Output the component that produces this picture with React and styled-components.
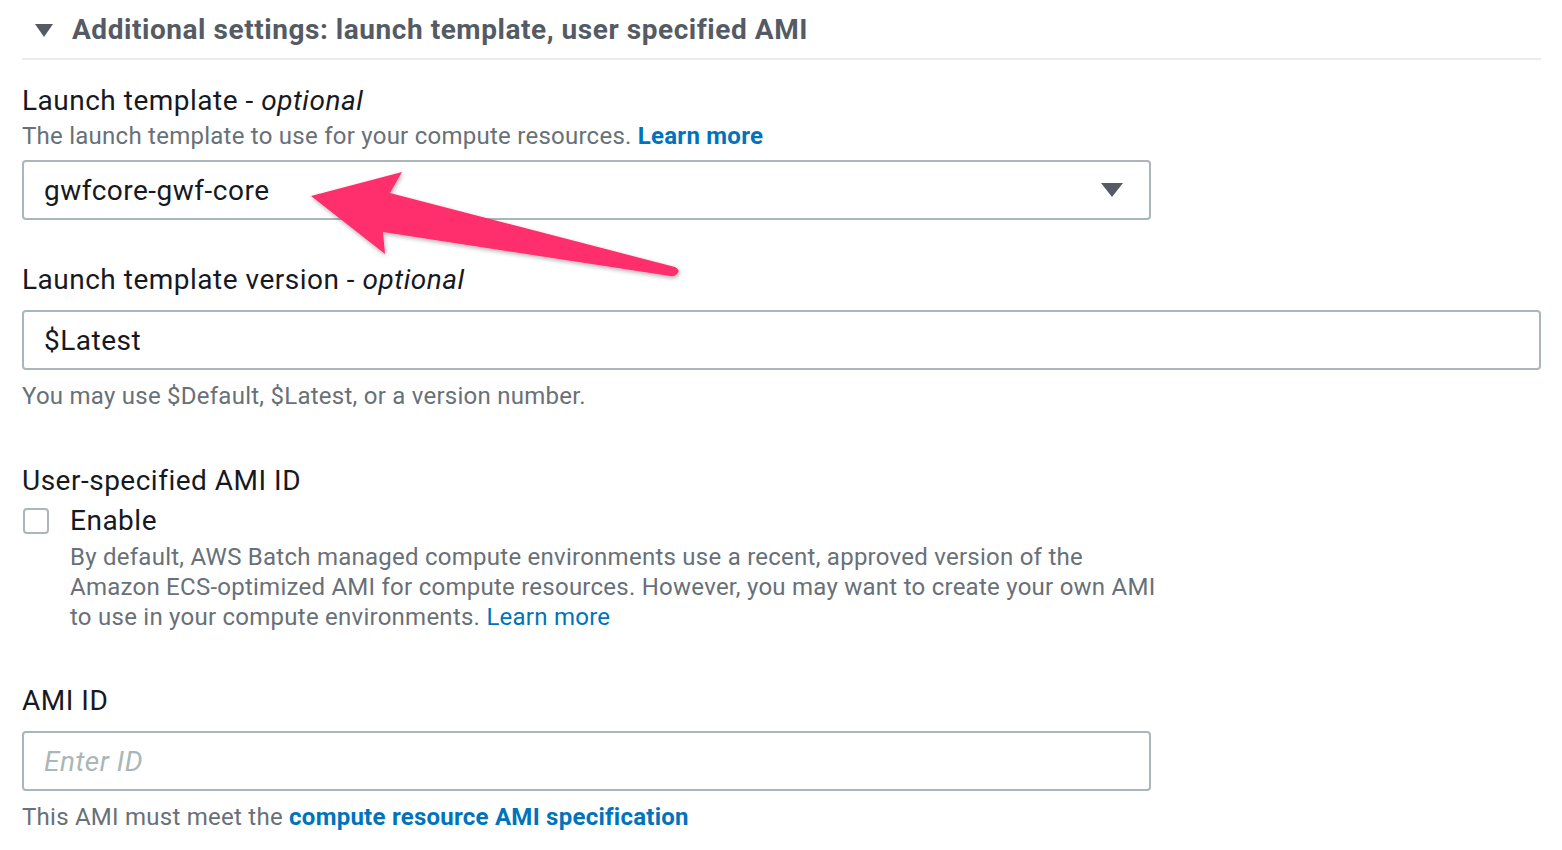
import styled, { createGlobalStyle } from "styled-components";

const GlobalStyle = createGlobalStyle`
  html, body {
    margin: 0;
    padding: 0;
    background: #ffffff;
  }
  body {
    font-family: Roboto, "Noto Sans", sans-serif;
    color: #16191f;
  }
`;

const Page = styled.div`
  position: relative;
  width: 1562px;
  height: 850px;
  box-sizing: border-box;
  padding: 1px 21px 0 22px;
  overflow: hidden;
`;

const Header = styled.div`
  display: flex;
  align-items: center;
  gap: 19px;
  padding: 9px 0 8px 13px;
  height: 40px;
  border-bottom: 2px solid #eaeded;
`;

const Caret = styled.span`
  width: 0;
  height: 0;
  border-left: 9px solid transparent;
  border-right: 9px solid transparent;
  border-top: 13px solid #545b64;
`;

const HeaderTitle = styled.h2`
  margin: 0;
  font-size: 28px;
  line-height: 40px;
  font-weight: 700;
  color: #545b64;
  letter-spacing: 0.55px;
`;

const Field = styled.div`
  display: flex;
  flex-direction: column;
  margin-top: ${(p) => p.$top}px;
  max-width: ${(p) => (p.$wide ? "1519px" : "1129px")};
`;

const Label = styled.div`
  font-size: 28px;
  line-height: 40px;
  letter-spacing: 0.5px;
  color: #16191f;
  em {
    font-style: italic;
  }
`;

const Desc = styled.div`
  font-size: 24px;
  line-height: 30px;
  letter-spacing: 0.25px;
  color: #687078;
  margin-top: ${(p) => p.$top || 0}px;
`;

const Link = styled.a`
  color: #0073bb;
  font-weight: ${(p) => (p.$bold ? 700 : 400)};
  text-decoration: none;
`;

const Box = styled.div`
  display: flex;
  align-items: center;
  justify-content: space-between;
  box-sizing: border-box;
  height: 60px;
  margin-top: ${(p) => p.$top}px;
  padding: 0 26px 0 20px;
  border: 2px solid #aab7b8;
  border-radius: 4px;
  font-size: 28px;
  letter-spacing: 0.5px;
  color: #16191f;
`;

const Placeholder = styled.span`
  color: #aab7b8;
  font-style: italic;
`;

const SelectCaret = styled.span`
  width: 0;
  height: 0;
  border-left: 11px solid transparent;
  border-right: 11px solid transparent;
  border-top: 14px solid #545b64;
`;

const CheckRow = styled.div`
  display: flex;
  gap: 21px;
  margin-top: 5px;
`;

const CheckBox = styled.span`
  flex: none;
  box-sizing: border-box;
  width: 26px;
  height: 26px;
  margin: 2px 0 0 1px;
  border: 2px solid #aab7b8;
  border-radius: 4px;
`;

const CheckText = styled.div`
  display: flex;
  flex-direction: column;
  width: 1100px;
  flex: none;
`;

const CheckLabel = styled.div`
  font-size: 28px;
  line-height: 30px;
  letter-spacing: 0.5px;
  color: #16191f;
`;

const Arrow = styled.svg`
  position: absolute;
  left: 0;
  top: 0;
  pointer-events: none;
`;

export default function App() {
  return (
    <Page>
      <GlobalStyle />
      <Header>
        <Caret />
        <HeaderTitle>
          Additional settings: launch template, user specified AMI
        </HeaderTitle>
      </Header>

      <Field $top={21}>
        <Label>
          Launch template - <em>optional</em>
        </Label>
        <Desc>
          The launch template to use for your compute resources.{" "}
          <Link $bold>Learn more</Link>
        </Desc>
        <Box $top={9}>
          <span>gwfcore-gwf-core</span>
          <SelectCaret />
        </Box>
      </Field>

      <Field $top={40} $wide>
        <Label>
          Launch template version - <em>optional</em>
        </Label>
        <Box $top={10}>
          <span>$Latest</span>
        </Box>
        <Desc $top={11}>You may use $Default, $Latest, or a version number.</Desc>
      </Field>

      <Field $top={50}>
        <Label>User-specified AMI ID</Label>
        <CheckRow>
          <CheckBox />
          <CheckText>
            <CheckLabel>Enable</CheckLabel>
            <Desc $top={6}>
              By default, AWS Batch managed compute environments use a recent,
              approved version of the Amazon ECS-optimized AMI for compute
              resources. However, you may want to create your own AMI to use in
              your compute environments. <Link>Learn more</Link>
            </Desc>
          </CheckText>
        </CheckRow>
      </Field>

      <Field $top={49}>
        <Label>AMI ID</Label>
        <Box $top={10}>
          <Placeholder>Enter ID</Placeholder>
        </Box>
        <Desc $top={11}>
          This AMI must meet the{" "}
          <Link $bold>compute resource AMI specification</Link>
        </Desc>
      </Field>

      <Arrow width="1562" height="850" viewBox="0 0 1562 850">
        <defs>
          <filter id="shadow" x="-10%" y="-20%" width="120%" height="140%">
            <feDropShadow dx="1" dy="2" stdDeviation="2" floodColor="#000" floodOpacity="0.3" />
          </filter>
        </defs>
        <path
          d="M311 196 L402 172 L390 193 L675 267 Q681 270 677 274 Q674 277 670 276 L383 232 L385 254 Z"
          fill="#ff2f6c"
          filter="url(#shadow)"
        />
      </Arrow>
    </Page>
  );
}
